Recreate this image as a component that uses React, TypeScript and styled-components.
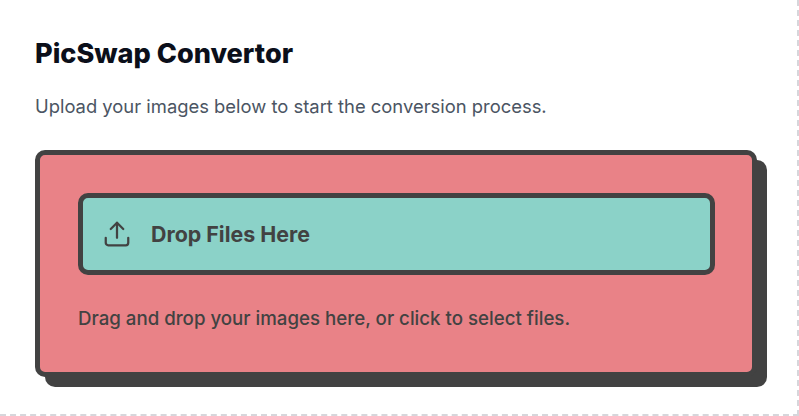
import React from "react";
import styled, { createGlobalStyle } from "styled-components";
import { Upload } from "lucide-react";

const Global = createGlobalStyle`
  html, body { margin: 0; padding: 0; background: #fff; }
  body { font-family: Inter, "Liberation Sans", sans-serif; }
`;

const Page = styled.main`
  box-sizing: border-box;
  width: 799px;
  height: 416px;
  padding: 36px 0 0 35px;
  border-right: 2px dashed #d6d6db;
  border-bottom: 2px dashed #d6d6db;
  overflow: hidden;
`;

const Title = styled.h1`
  margin: 0;
  font-size: 27.1px;
  line-height: 36px;
  font-weight: 800;
  color: #0b0f1a;
`;

const Subtitle = styled.p`
  margin: 20px 0 0;
  font-size: 18.4px;
  line-height: 28px;
  color: #4b5563;
`;

const Card = styled.section`
  box-sizing: border-box;
  width: 722px;
  height: 227px;
  margin-top: 30px;
  padding: 38px;
  background: #e98287;
  border: 5px solid #424242;
  border-radius: 10px;
  box-shadow: 10px 10px 0 #424242;
`;

const DropZone = styled.button`
  box-sizing: border-box;
  display: flex;
  align-items: center;
  gap: 19px;
  width: 637px;
  height: 82px;
  padding: 0 19px;
  background: #8bd2c8;
  border: 5px solid #424242;
  border-radius: 10px;
  font: inherit;
  cursor: pointer;
`;

const DropLabel = styled.span`
  font-size: 21.4px;
  font-weight: 700;
  color: #424242;
`;

const Hint = styled.p`
  margin: 30px 0 0;
  font-size: 18.7px;
  line-height: 27px;
  font-weight: 450;
  color: #424242;
`;

export default function App() {
  return (
    <>
      <Global />
      <Page>
        <Title>PicSwap Convertor</Title>
        <Subtitle>Upload your images below to start the conversion process.</Subtitle>
        <Card>
          <DropZone type="button">
            <Upload size={30} color="#424242" strokeWidth={1.8} />
            <DropLabel>Drop Files Here</DropLabel>
          </DropZone>
          <Hint>Drag and drop your images here, or click to select files.</Hint>
        </Card>
      </Page>
    </>
  );
}
